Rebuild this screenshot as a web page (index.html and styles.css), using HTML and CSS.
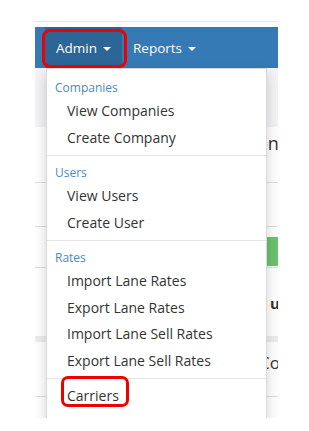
FILE: index.html
```html
<!DOCTYPE html>
<html>
<head>
<meta charset="utf-8" />
<title>Admin menu</title>
<link rel="stylesheet" href="styles.css">
</head>
<body>

<div class="shot">
	<ul class="navbar">
		<li class="nav-item active">
			<a class="nav-link" href="#">Admin<span class="caret"></span></a>
			<span class="mark mark-admin"></span>

			<ul class="dropdown">
				<li class="dd-header">Companies</li>
				<li><a href="#">View Companies</a></li>
				<li><a href="#">Create Company</a></li>
				<li class="dd-divider"></li>
				<li class="dd-header">Users</li>
				<li><a href="#">View Users</a></li>
				<li><a href="#">Create User</a></li>
				<li class="dd-divider"></li>
				<li class="dd-header">Rates</li>
				<li><a href="#">Import Lane Rates</a></li>
				<li><a href="#">Export Lane Rates</a></li>
				<li><a href="#">Import Lane Sell Rates</a></li>
				<li><a href="#">Export Lane Sell Rates</a></li>
				<li class="dd-divider"></li>
				<li class="carriers"><a href="#">Carriers</a><span class="mark mark-carriers"></span></li>
				<li><a href="#">Carrier Accounts</a></li>
			</ul>
		</li>
		<li class="nav-item">
			<a class="nav-link" href="#">Reports<span class="caret"></span></a>
		</li>
	</ul>

	<div class="page">
		<div class="subbar"></div>
		<div class="row row-title"><span>on</span></div>
		<div class="row row-plain"></div>
		<div class="row row-action"><span class="btn-green"></span></div>
		<div class="row row-label"><span>u</span></div>
		<div class="band"></div>
		<div class="row row-co"><span>Co</span></div>
	</div>
</div>

</body>
</html>
```

FILE: styles.css
```css
/*reset*/
* { padding: 0; margin: 0; box-sizing: border-box; }
body { background: #fff; font-family: "Open Sans", "Liberation Sans", sans-serif; color: #333; }
li { list-style: none; }
a { text-decoration: none; }

/*frame*/
.shot { position: relative; width: 243px; height: 397px; margin: 21px 0 0 35px; border-top: 1px solid #e8e8e8; overflow: hidden; }

/*navbar*/
.navbar { display: flex; height: 41px; margin-top: 5px; padding-left: 10px; background: #357ab4; }
.nav-item { position: relative; }
.nav-item.active { background: #2c6696; }
.nav-link { display: flex; align-items: center; height: 41px; padding: 0 11px; color: #fff; font-size: 13.5px; }
.caret { width: 0; height: 0; margin: 2px 0 0 6px; border-top: 4px solid #fff; border-left: 4px solid transparent; border-right: 4px solid transparent; }

/*red annotation marks*/
.mark { position: absolute; border: 3px solid #ee0000; border-radius: 8px; z-index: 3; }
.mark-admin { top: 2px; left: -3px; right: -5px; bottom: 0; }
.mark-carriers { top: -7px; left: 14px; width: 68px; height: 31px; border-radius: 7px; }

/*dropdown*/
.dropdown { position: absolute; top: 41px; left: 1px; z-index: 2; width: 221px; padding: 6px 0 5px; background: #fff; border: 1px solid rgba(0,0,0,.15); box-shadow: 0 6px 12px rgba(0,0,0,.18); }
.dropdown li { position: relative; }
.dropdown a { display: block; padding: 3px 20px; line-height: 20.5px; font-size: 14px; color: #333; white-space: nowrap; }
.dd-header { padding: 4px 8px 2px; font-size: 12px; line-height: 17px; color: #4a89c0; }
.dd-divider { height: 1px; margin: 4px 0; background: #e5e5e5; }

/*page behind the menu*/
.page { background: #fff; }
.subbar { height: 59px; background: #f3f3f5; }
.row { border-bottom: 1px solid #dedede; white-space: nowrap; }
.row-title { height: 56px; padding: 5px 0 0 222px; font-size: 18px; line-height: 22px; }
.row-plain { height: 44px; }
.row-action { height: 41px; padding-top: 10px; border-bottom-color: #d3e0ec; }
.btn-green { display: block; height: 29px; margin-left: 180px; background: #6cc270; }
.row-label { height: 68px; padding: 26px 0 0 235px; border-bottom: 0; font-size: 15px; font-weight: bold; line-height: 18px; }
.band { height: 6px; background: #ececec; }
.row-co { height: 55px; padding: 10px 0 0 224px; font-size: 17px; line-height: 22px; }
```
